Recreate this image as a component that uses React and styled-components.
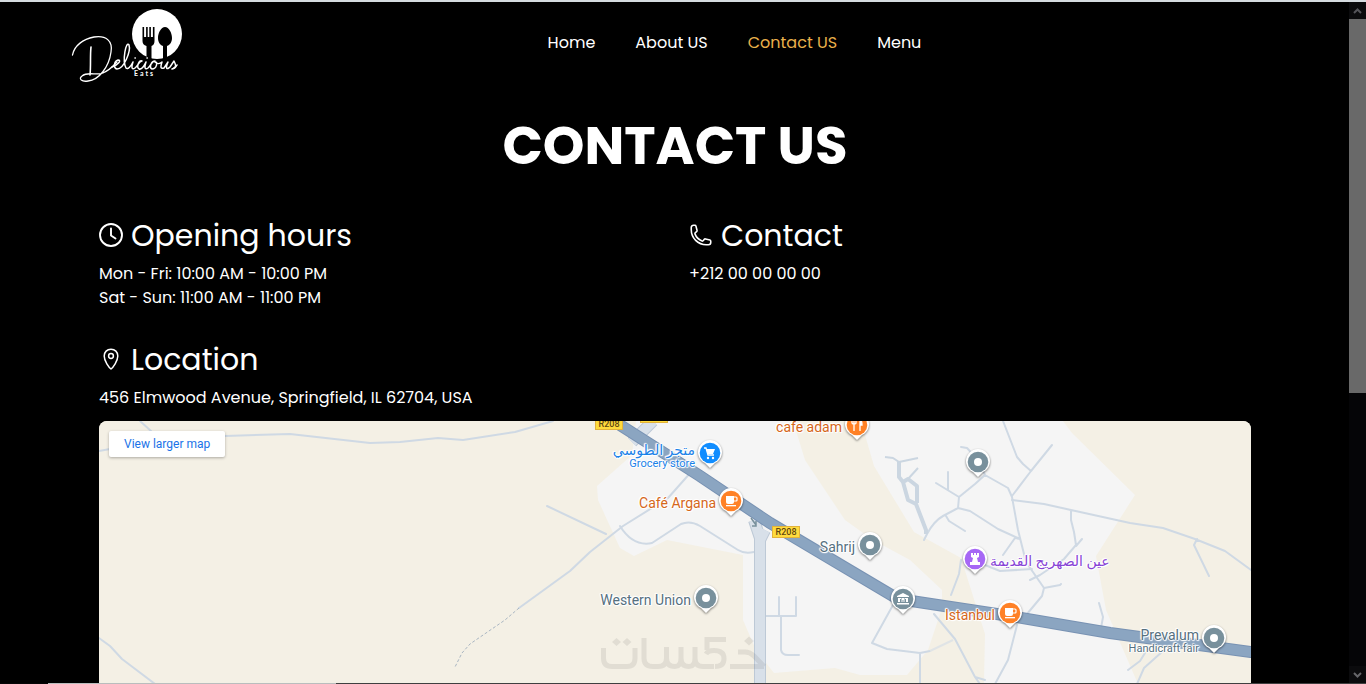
import React from "react";
import styled, { createGlobalStyle, css } from "styled-components";

const GlobalStyle = createGlobalStyle`
  * { box-sizing: border-box; }
  body { margin: 0; background: #000; color: #fff; font-family: Poppins, Inter, "Liberation Sans", sans-serif; }
  h1, h2, p { margin: 0; }
`;

const Shell = styled.div`
  display: flex;
  flex-direction: column;
  height: 100vh;
  border-top: 2px solid #d5dbdf;
`;
const Body = styled.div`
  flex: 1;
  min-height: 0;
  display: grid;
  grid-template-columns: minmax(0, 1fr) 17px;
`;
const Viewport = styled.div`
  overflow-y: auto;
  scrollbar-width: none;
`;
const ScrollBar = styled.div`
  display: flex;
  flex-direction: column;
  background: #050507;
`;
const ScrollButton = styled.button`
  height: 17px;
  padding: 0;
  border: 0;
  background: #0b0b0d;
  display: grid;
  place-items: center;
`;
const Thumb = styled.div`
  flex: 375;
  background: #696969;
`;
const Track = styled.div`
  flex: 273;
`;
const EdgeLine = styled.div`
  height: 1px;
  display: flex;
  background: #3f3f3f;
`;
const EdgeDark = styled.span`
  width: 48px;
  background: #050505;
`;
const EdgeLight = styled.span`
  width: 288px;
  background: #b9bdbd;
`;

const Header = styled.header`
  display: grid;
  grid-template-columns: auto 1fr;
  align-items: center;
  height: 82px;
  padding: 0 68px;
`;
const LogoLink = styled.a`
  display: block;
  width: 120px;
  height: 82px;
  color: #fff;
`;
const Nav = styled.nav`
  display: flex;
  justify-content: center;
  gap: 40px;
`;
const NavLink = styled.a`
  font-size: 16px;
  line-height: 24px;
  text-decoration: none;
  color: ${(p) => (p.$active ? "#e9b04b" : "#fff")};
`;
const Main = styled.main`
  padding: 28px 98px 32px 99px;
`;
const Title = styled.h1`
  text-align: center;
  font-size: 53px;
  line-height: 68px;
  font-weight: 700;
`;
const Columns = styled.div`
  display: grid;
  grid-template-columns: 1fr 1fr;
  column-gap: 28px;
  row-gap: 32px;
  margin-top: 38px;
`;
const Section = styled.section`
  grid-column: ${(p) => (p.$wide ? "1 / -1" : "auto")};
`;
const Heading = styled.h2`
  display: flex;
  align-items: center;
  gap: 8px;
  margin-bottom: 8px;
  font-size: 30px;
  line-height: 36px;
  font-weight: 400;
`;
const HeadingIcon = styled.svg`
  width: 24px;
  height: 24px;
  margin-bottom: 2px;
  fill: none;
  stroke: #fff;
  stroke-linecap: round;
  stroke-linejoin: round;
`;
const Line = styled.p`
  font-size: 16px;
  line-height: 24px;
`;

const Map = styled.div`
  position: relative;
  height: 450px;
  margin-top: 11px;
  border-radius: 8px;
  overflow: hidden;
  background: #f4f0e5;
  font-family: Roboto, "Noto Sans", "DejaVu Sans", sans-serif;
`;
const MapDrawing = styled.svg`
  display: block;
  width: 100%;
  height: 450px;
`;
const MapLink = styled.a`
  position: absolute;
  top: 10px;
  left: 10px;
  padding: 4px 15px;
  border-radius: 2px;
  background: #fff;
  box-shadow: 0 1px 3px rgba(0, 0, 0, 0.3);
  color: #1a73e8;
  font-size: 12px;
  line-height: 18px;
  text-decoration: none;
`;
const Place = styled.div`
  position: absolute;
  left: calc(50% + ${(p) => p.$x}px);
  top: ${(p) => p.$y}px;
`;
const PinDrawing = styled.svg`
  position: absolute;
  left: -14px;
  top: -14px;
  width: 28px;
  height: 32px;
  overflow: visible;
  filter: drop-shadow(0 1px 1px rgba(0, 0, 0, 0.5));
`;
const PlaceLabel = styled.span`
  position: absolute;
  top: ${(p) => (p.$detail ? "-12px" : "-7px")};
  ${(p) => (p.$after ? css`left: 15px;` : css`right: 15px;`)}
  display: grid;
  justify-items: end;
  white-space: nowrap;
  font-size: 14px;
  line-height: 18px;
  color: ${(p) => p.$color};
  text-shadow: 1px 0 1px #fff, -1px 0 1px #fff, 0 1px 1px #fff, 0 -1px 1px #fff, 1px 1px 1px #fff, -1px -1px 1px #fff;
`;
const Detail = styled.small`
  font-size: 11px;
  line-height: 10px;
`;
const Watermark = styled.svg`
  position: absolute;
  left: calc(50% - 79px);
  top: 209px;
  color: rgba(60, 60, 60, 0.1);
`;
const RoadSign = styled.span`
  position: absolute;
  left: calc(50% + ${(p) => p.$x}px);
  top: ${(p) => p.$y}px;
  width: 28px;
  height: 12px;
  border: 1px solid #e2b33b;
  background: #ffdb3d;
  color: #5f4610;
  font-size: 9px;
  line-height: 10px;
  font-weight: 500;
  text-align: center;
`;

const glyphs = {
  dot: <circle r="4" fill="#fff" />,
  cup: (
    <g fill="#fff">
      <path d="M-5-5H3V1Q3 3 1 3H-3Q-5 3-5 1Z" />
      <path d="M3-4H5Q6-4 6-3V-1Q6 0 5 0H3" fill="none" stroke="#fff" strokeWidth="1.2" />
      <rect x="-5" y="4" width="10" height="1.3" />
    </g>
  ),
  cart: (
    <g fill="#fff">
      <path d="M-4-4H5L3 1H-2Z" />
      <path d="M-6-5H-4L-2 2H4" fill="none" stroke="#fff" strokeWidth="1.3" />
      <circle cx="-2" cy="5" r="1.2" />
      <circle cx="3" cy="5" r="1.2" />
    </g>
  ),
  fork: (
    <g stroke="#fff" fill="none" strokeWidth="1.3">
      <path d="M-5-6V-2Q-5-1-3-1Q-1-1-1-2V-6M-3-6V6" />
      <path d="M3 6V-6Q5-5 5 0H3" fill="#fff" />
    </g>
  ),
  rook: <path fill="#fff" d="M-4-6H-2V-4H-1V-6H1V-4H2V-6H4V-2L2-1L3 3H5V6H-5V3H-3L-2-1L-4-2Z" />,
  bank: (
    <g fill="#fff">
      <path d="M-6-2V-3L0-6L6-3V-2ZM-6 4H6V5.500H-6Z" />
      <path d="M-5-1H-2V0H-3V3H-5ZM-1.500-1H1.500V3H.5V1H-.5V3H-1.500ZM2-1H5V3H3V0H2Z" />
    </g>
  ),
};

const slate = "#78909c";
const orange = "#ff8126";
const places = [
  { x: 182, y: 4, fill: orange, color: "#d5671b", icon: "fork", name: "cafe adam" },
  { x: 35, y: 32, fill: "#118dff", color: "#1a82e8", icon: "cart", name: "متجر الطوسي", detail: "Grocery store" },
  { x: 56, y: 80, fill: orange, color: "#d5671b", icon: "cup", name: "Café Argana" },
  { x: 303, y: 41, fill: slate, icon: "dot" },
  { x: 195, y: 124, fill: slate, color: "#56707f", icon: "dot", name: "Sahrij" },
  { x: 300, y: 138, fill: "#a667f5", color: "#8743d6", icon: "rook", name: "عين الصهريج القديمة", after: true },
  { x: 31, y: 177, fill: slate, color: "#56707f", icon: "dot", name: "Western Union" },
  { x: 228, y: 178, fill: slate, icon: "bank" },
  { x: 335, y: 192, fill: orange, color: "#d5671b", icon: "cup", name: "Istanbul" },
  { x: 539, y: 217, fill: slate, color: "#56707f", icon: "dot", name: "Prevalum", detail: "Handicraft fair" },
];

function Pin({ fill, icon }) {
  return (
    <PinDrawing viewBox="-14 -14 28 32" aria-hidden="true">
      <path fill="#fff" d="M0 15L-5 10A12 12 0 1 1 5 10Z" />
      <circle r="10.300" fill={fill} />
      {glyphs[icon]}
    </PinDrawing>
  );
}

function Logo() {
  return (
    <svg viewBox="68 2 120 82" width="120" height="82" role="img" aria-label="Delicious Eats">
      <circle cx="157" cy="34" r="25" fill="#fff" />
      <g fill="#000">
        <path d="M142.500 27h1.600v10h2V27h1.600v10h1.600V27h1.600v10h2V27h1.600V41Q154.500 45 151.500 46V60H146.500V46Q142.500 45 142.500 41Z" />
        <path d="M165 27C169 27 172 33 172 38C172 42 170 45 167 46V60H163V46C160 45 158 42 158 38C158 33 161 27 165 27Z" />
        <path d="M134 60Q140 56 146 59H170L178 58V66H134Z" />
      </g>
      <g fill="none" stroke="#fff" strokeLinecap="round" strokeLinejoin="round">
        <path strokeWidth="1.300" d="M72.500 55C74 46 83 39 94 37C106 35 113 41 111 52C109 67 99 80 88 81C82 82 78 79 82 76C88 71 97 76 103 73C110 70 113 66 117 62" />
        <path strokeWidth="1.600" d="M91 47C90 56 91 65 90 75" />
        <path strokeWidth="1.500" d="M112 67C118 65 122 60 118 60C114 61 113 68 117 69C124 69 131 51 129 45C126 40 122 61 126 68C128 70 131 66 133 62C131 68 132 70 135 68C138 66 139 61 142 61C139 60 136 67 139 69C142 70 144 66 146 62C144 68 145 70 148 68C151 65 152 61 155 61C151 61 149 68 152 69C157 69 158 61 155 62C157 64 160 64 162 62C160 68 161 69 164 68L168 62C165 69 167 70 170 67L174 61C176 65 177 68 172 69" />
        <path strokeWidth="1.600" d="M135 58h.3M147 58h.3M174 68Q176 67 177 65" />
      </g>
      <text x="134" y="76" fill="#fff" fontFamily="Lato, sans-serif" fontWeight="700" fontSize="7" letterSpacing="2">Eats</text>
    </svg>
  );
}

function MapArt() {
  return (
    <MapDrawing viewBox="99 421 1152 450" preserveAspectRatio="xMidYMin slice" aria-hidden="true">
      <rect x="-400" y="421" width="2200" height="450" fill="#f4f0e5" />
      <g fill="#f5f5f5">
        <path d="M636 421H793L805 460L845 520L873 540L910 560L942 590V608L928 650L907 675H860L835 668L774 673L756 650L743 620V555L667 540L634 556L620 548L598 500L597 486L632 455Z" />
        <path d="M861 421H1063L1072 433L1135 495L1096 556L1106 610L1138 684V871H980L985 634L961 558L914 532L874 466Z" />
      </g>
      <g fill="none" stroke="#cfd9e4" strokeWidth="2" strokeLinejoin="round" strokeLinecap="round">
        <path d="M99 451L110 449M140 421L151 431M225 436L290 434L370 443L400 442L438 438L463 440L515 432L553 421" />
        <path d="M547 506L606 534M692 471L668 498L623 526L590 552L570 571L519 608M620 526Q633 547 652 543L681 524Q690 520 700 526L738 550Q744 554 754 552" />
        <path d="M99 638L110 646L122 659L155 684M779 597V616M796 597V616M765 616H796M781 616V650Q782 655 788 655H799" />
        <path d="M893 605L872 643L887 649L920 653L930 651M920 653V684M934 614L955 639L975 677L980 684M995 684L1008 660L1017 625M975 677L985 680" />
        <path d="M961 447L967 448L978 460L985 475L1008 488L1012 497L1018 530L1026 562L1044 588L1042 596L1027 614M985 475L975 484L959 497L958 508L943 516Q934 521 927 534L924 540M936 483L959 497M948 472V490M946 516L949 521L965 531M958 508L970 511L998 529L1020 539L1015 538L1003 555" />
        <path d="M1003 421L1017 457L1023 464L1031 471L1052 445M1031 471L1012 496M1012 500L1044 504L1071 510L1130 523L1163 528L1195 539L1225 551L1251 570M1071 510V520L1074 532L1076 545L1064 559L1040 575L1030 580M1082 539L1076 546M1197 539L1194 545L1209 576" />
        <path d="M961 560L959 574L951 595M980 563L1000 571L1032 569M1044 588L1060 585L1061 584M1099 603L1103 617L1101 628M1145 653L1140 661L1128 670M1163 651L1144 668L1137 684" />
      </g>
      <path d="M930 651L953 640" fill="none" stroke="#e0e4e6" strokeWidth="2" />
      <path d="M519 608L505 620L470 644L462 653L455 667" fill="none" stroke="#a9b6c2" strokeDasharray="3 2" />
      <g fill="none" stroke="#cbd6e1" strokeWidth="4" strokeLinejoin="round">
        <path d="M899 461V477L903 482L908 500L916 504L926 530V534M903 482L908 479L917 486V503" />
        <path strokeWidth="2" d="M885 457L893 458L899 462L918 458M908 479L918 468" />
      </g>
      <path d="M632 442L653 421M754 520L760 538M765 530L760 540V871" fill="none" stroke="#bdc9d6" strokeWidth="12" />
      <path d="M632 442L653 421M754 520L760 538M765 530L760 540V871" fill="none" stroke="#d8e0e9" strokeWidth="10" />
      <path d="M598 411L700 476L770 523L898 599L1010 616L1110 633L1251 652L1500 686" fill="none" stroke="#7892b3" strokeWidth="12" />
      <path d="M598 411L700 476L770 523L898 599L1010 616L1110 633L1251 652L1500 686" fill="none" stroke="#8ba5c1" strokeWidth="10" />
      <path d="M751 518L756 525M756 521V526H752" fill="none" stroke="#78909c" strokeWidth="1.500" />
    </MapDrawing>
  );
}

const ClockIcon = () => (
  <HeadingIcon viewBox="0 0 24 24" aria-hidden="true" strokeWidth="1.900">
    <circle cx="12" cy="12" r="11" />
    <path d="M12 5.500V12.500L16.500 15.500" />
  </HeadingIcon>
);
const PhoneIcon = () => (
  <HeadingIcon viewBox="0 0 24 24" aria-hidden="true" strokeWidth="1.600">
    <path d="M2.250 6.750c0 8.284 6.716 15 15 15h2.250a2.250 2.250 0 0 0 2.250-2.250v-1.372c0-.516-.351-.966-.852-1.091l-4.423-1.106c-.440-.110-.902.055-1.173.417l-.970 1.293c-.282.376-.769.542-1.210.380a12.035 12.035 0 0 1-7.143-7.143c-.162-.441.004-.928.380-1.210l1.293-.970c.363-.271.527-.734.417-1.173L6.963 3.102a1.125 1.125 0 0 0-1.091-.852H4.500A2.250 2.250 0 0 0 2.250 4.500v2.250Z" />
  </HeadingIcon>
);
const LocationIcon = () => (
  <HeadingIcon viewBox="0 0 24 24" aria-hidden="true" strokeWidth="1.500">
    <path d="M12 2.200C8 2.200 5.200 5.100 5.200 9C5.200 14 10 20.500 12 22C14 20.500 18.800 14 18.800 9C18.800 5.100 16 2.200 12 2.200Z" />
    <circle cx="12" cy="9" r="2.400" />
  </HeadingIcon>
);

const navItems = ["Home", "About US", "Contact US", "Menu"];

export default function App() {
  return (
    <Shell>
      <GlobalStyle />
      <Body>
        <Viewport>
          <Header>
            <LogoLink href="#home"><Logo /></LogoLink>
            <Nav>
              {navItems.map((item) => (
                <NavLink key={item} href="#" $active={item === "Contact US"}>{item}</NavLink>
              ))}
            </Nav>
          </Header>
          <Main>
            <Title>CONTACT US</Title>
            <Columns>
              <Section>
                <Heading><ClockIcon />Opening hours</Heading>
                <Line>Mon - Fri: 10:00 AM - 10:00 PM</Line>
                <Line>Sat - Sun: 11:00 AM - 11:00 PM</Line>
              </Section>
              <Section>
                <Heading><PhoneIcon />Contact</Heading>
                <Line>+212 00 00 00 00</Line>
              </Section>
              <Section $wide>
                <Heading><LocationIcon />Location</Heading>
                <Line>456 Elmwood Avenue, Springfield, IL 62704, USA</Line>
                <Map>
                  <MapArt />
                  <RoadSign $x={-80} $y={-3}>R208</RoadSign>
                  <RoadSign $x={-35} $y={-10} />
                  <RoadSign $x={97} $y={105}>R208</RoadSign>
                  {places.map((p) => (
                    <Place key={`${p.x}-${p.y}`} $x={p.x} $y={p.y}>
                      <Pin fill={p.fill} icon={p.icon} />
                      {p.name && (
                        <PlaceLabel $color={p.color} $after={p.after} $detail={p.detail}>
                          {p.name}
                          {p.detail && <Detail>{p.detail}</Detail>}
                        </PlaceLabel>
                      )}
                    </Place>
                  ))}
                  <Watermark width="176" height="46" viewBox="0 0 176 46" role="img" aria-label="خمسات">
                    <path
                      d="M7.500 18V28Q7.500 36.500 16 36.500H31Q39 36.500 39 28V18M48 8V28Q48 36.500 57 36.500H62Q70.500 36.500 70.500 28V17M70.500 28Q70.500 36.500 79 36.500Q85 36.500 85 28V17M85 28Q85 36.500 93 36.500Q99 36.500 99 28V17M99 28Q99 36.500 107 36.500H118M130 9.500H111V20M110 24Q112 20.500 118 20.500Q128 20.500 128 28.500Q128 36.500 119 36.500M134 36.500H168M142 22H149Q154 22 158 26L168 36.500"
                      fill="none"
                      stroke="currentColor"
                      strokeWidth="5"
                    />
                    <path d="M20.500 8L25 12L20.500 16L16 12ZM31 8L35.500 12L31 16L26.500 12ZM153 6.500L158 11L153 15.500L148 11Z" fill="currentColor" />
                  </Watermark>
                  <MapLink href="#map">View larger map</MapLink>
                </Map>
              </Section>
            </Columns>
          </Main>
        </Viewport>
        <ScrollBar>
          <ScrollButton aria-label="Scroll up">
            <svg width="9" height="6" viewBox="0 0 9 6"><path d="M1 5L4.500 1.500L8 5" fill="none" stroke="#55555a" strokeWidth="2" /></svg>
          </ScrollButton>
          <Thumb />
          <Track />
          <ScrollButton aria-label="Scroll down">
            <svg width="9" height="6" viewBox="0 0 9 6"><path d="M1 1L4.500 4.500L8 1" fill="none" stroke="#66666a" strokeWidth="2" /></svg>
          </ScrollButton>
        </ScrollBar>
      </Body>
      <EdgeLine><EdgeDark /><EdgeLight /></EdgeLine>
    </Shell>
  );
}
